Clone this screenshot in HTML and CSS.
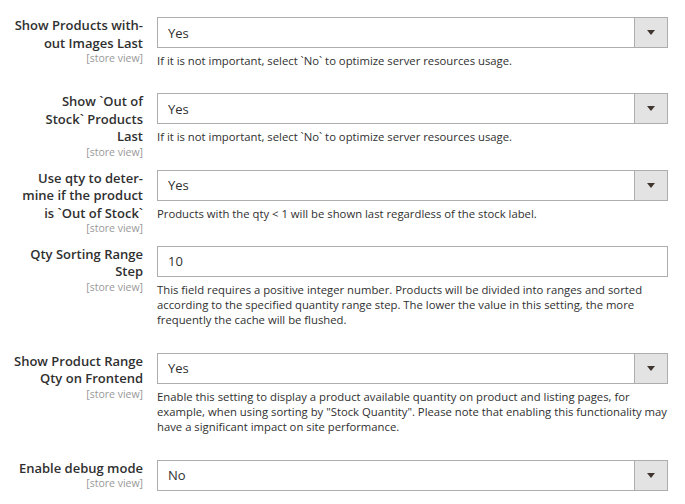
FILE: index.html
```html
<!DOCTYPE html>
<html>
<head>
<meta charset="utf-8">
<link rel="stylesheet" href="styles.css">
</head>
<body>
<div class="config">
  <div class="row">
    <div class="label"><span class="title">Show Products with-<br>out Images Last</span><span class="scope">[store view]</span></div>
    <div class="value">
      <div class="select"><span class="val">Yes</span><span class="btn"><span class="arrow"></span></span></div>
      <p class="note">If it is not important, select `No` to optimize server resources usage.</p>
    </div>
  </div>
  <div class="row">
    <div class="label"><span class="title">Show `Out of<br>Stock` Products<br>Last</span><span class="scope">[store view]</span></div>
    <div class="value">
      <div class="select"><span class="val">Yes</span><span class="btn"><span class="arrow"></span></span></div>
      <p class="note">If it is not important, select `No` to optimize server resources usage.</p>
    </div>
  </div>
  <div class="row">
    <div class="label"><span class="title">Use qty to deter-<br>mine if the product<br>is `Out of Stock`</span><span class="scope">[store view]</span></div>
    <div class="value">
      <div class="select"><span class="val">Yes</span><span class="btn"><span class="arrow"></span></span></div>
      <p class="note">Products with the qty &lt; 1 will be shown last regardless of the stock label.</p>
    </div>
  </div>
  <div class="row">
    <div class="label"><span class="title">Qty Sorting Range<br>Step</span><span class="scope">[store view]</span></div>
    <div class="value">
      <div class="input"><span class="val">10</span></div>
      <p class="note">This field requires a positive integer number. Products will be divided into ranges and sorted according to the specified quantity range step. The lower the value in this setting, the more frequently the cache will be flushed.</p>
    </div>
  </div>
  <div class="row">
    <div class="label"><span class="title">Show Product Range<br>Qty on Frontend</span><span class="scope">[store view]</span></div>
    <div class="value">
      <div class="select"><span class="val">Yes</span><span class="btn"><span class="arrow"></span></span></div>
      <p class="note">Enable this setting to display a product available quantity on product and listing pages, for example, when using sorting by "Stock Quantity". Please note that enabling this functionality may have a significant impact on site performance.</p>
    </div>
  </div>
  <div class="row">
    <div class="label"><span class="title">Enable debug mode</span><span class="scope">[store view]</span></div>
    <div class="value">
      <div class="select"><span class="val">No</span><span class="btn"><span class="arrow"></span></span></div>
    </div>
  </div>
</div>
</body>
</html>
```
FILE: styles.css
```css
html, body {
  margin: 0;
  padding: 0;
  background: #fff;
}
body {
  font-family: "Open Sans", "Liberation Sans", sans-serif;
  color: #303030;
}
.config {
  display: flex;
  flex-direction: column;
  gap: 10.5px;
  padding: 17px 17px 0 0;
}
.row {
  display: flex;
  align-items: flex-start;
}
.label {
  width: 143px;
  flex: none;
  display: flex;
  flex-direction: column;
  align-items: flex-end;
  text-align: right;
  box-sizing: border-box;
}
.title {
  display: block;
  font-size: 13px;
  font-weight: 600;
  line-height: 17.6px;
  color: #303030;
  white-space: nowrap;
}
.scope {
  display: block;
  font-size: 10.5px;
  line-height: 12px;
  color: #999;
}
.value {
  margin-left: 14px;
  flex: 1;
  min-width: 0;
}
.select, .input {
  height: 31px;
  box-sizing: border-box;
  border: 1px solid #adadad;
  display: flex;
  align-items: center;
  font-size: 13px;
  color: #303030;
  background: #fff;
}
.val {
  flex: 1;
  padding-left: 10px;
}
.btn {
  width: 32px;
  align-self: stretch;
  background: #e3e3e3;
  border-left: 1px solid #adadad;
  display: flex;
  align-items: center;
  justify-content: center;
}
.arrow {
  width: 0;
  height: 0;
  border-left: 4px solid transparent;
  border-right: 4px solid transparent;
  border-top: 5px solid #41362f;
}
.note {
  margin: 5px 0 14.5px;
  font-size: 11.3px;
  line-height: 15.3px;
  color: #303030;
}
```
